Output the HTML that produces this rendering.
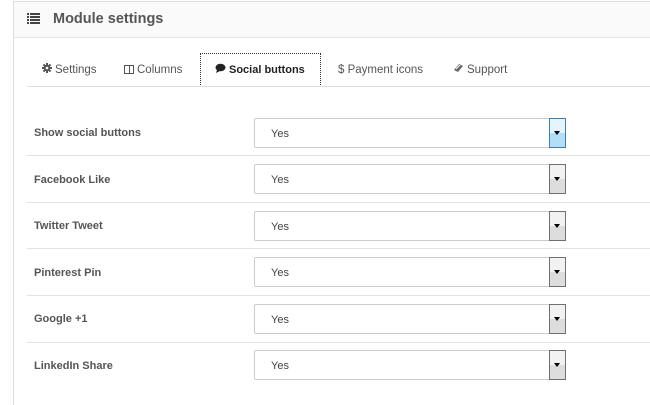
<!DOCTYPE html>
<html style="height:405px;overflow:hidden"><head><style>
body{margin:0;width:650px;height:405px;background:#fff;font-family:"Liberation Sans",sans-serif;overflow:hidden;position:relative}
.panel{position:absolute;left:13px;top:1px;width:637px;height:404px;border-left:1px solid #ddd;border-top:1px solid #ddd}
.head{position:absolute;left:14px;top:2px;width:636px;height:35px;background:#fafafa;border-bottom:1px solid #e5e5e5}
.head span{position:absolute;left:39px;top:9px;font-size:14.5px;font-weight:bold;color:#555}
.tabline{position:absolute;left:27px;top:86px;width:623px;border-top:1px solid #ddd}
.tab{position:absolute;top:63px;font-size:11.5px;line-height:14px;color:#555;white-space:nowrap}
.tab i{display:inline-block;vertical-align:middle;margin-right:3px;font-style:normal}
.active{position:absolute;left:200px;top:53px;width:119px;height:33px;border:1px dotted #333;border-bottom:none;background:#fff}
.lbl{position:absolute;left:34px;font-size:11px;font-weight:bold;color:#555}
.sel{position:absolute;left:254px;width:311px;height:30px;border:1px solid #ccc;border-radius:2px;background:#fff;box-sizing:border-box}
.sel span{position:absolute;left:16px;top:9px;font-size:11px;color:#444}
.btn{position:absolute;left:549px;width:17px;height:30px;border:1px solid #707070;box-sizing:border-box;background:linear-gradient(#f2f2f2 50%,#ddd 50%)}
.btn.f{border-color:#3c7fb1;background:linear-gradient(#e5f4fc 50%,#b4def7 50%)}
.btn:after{content:"";position:absolute;left:4px;top:12px;border-left:3.5px solid transparent;border-right:3.5px solid transparent;border-top:4px solid #000}
.hr{position:absolute;left:27px;width:623px;border-top:1px solid #e3e3e3}
</style></head><body>
<div class="panel"></div>
<div class="head">
<svg style="position:absolute;left:13px;top:11px" width="13" height="11"><g fill="#444"><rect x="0" y="0" width="2" height="2"/><rect x="0" y="3" width="2" height="2"/><rect x="0" y="6" width="2" height="2"/><rect x="0" y="9" width="2" height="2"/><rect x="3" y="0" width="10" height="2"/><rect x="3" y="3" width="10" height="2"/><rect x="3" y="6" width="10" height="2"/><rect x="3" y="9" width="10" height="2"/></g></svg>
<span>Module settings</span></div>
<div class="active"></div>
<div class="tabline"></div>
<div class="tab" style="left:42px"><i><svg width="10" height="10" viewBox="0 0 10 10"><g fill="#555"><circle cx="5" cy="5" r="3.2"/><rect x="4" y="0" width="2" height="10"/><rect x="0" y="4" width="10" height="2"/><rect x="4" y="0" width="2" height="10" transform="rotate(45 5 5)"/><rect x="4" y="0" width="2" height="10" transform="rotate(-45 5 5)"/></g><circle cx="5" cy="5" r="1.3" fill="#fff"/></svg></i>Settings</div>
<div class="tab" style="left:124px"><i style="width:10px;height:9px;border:1px solid #555;box-sizing:border-box;background:linear-gradient(90deg,transparent 4px,#555 4px,#555 5px,transparent 5px)"></i>Columns</div>
<div class="tab" style="left:215px;color:#222;font-weight:bold;font-size:11px"><i><svg width="11" height="10"><ellipse cx="5.5" cy="4.5" rx="5" ry="3.8" fill="#222"/><path d="M2 7 L1 10 L5 8z" fill="#222"/></svg></i>Social buttons</div>
<div class="tab" style="left:338px">$ Payment icons</div>
<div class="tab" style="left:453px"><i><svg width="11" height="10"><path d="M1 7 L6 1 L10 3 L5 9z" fill="#666"/><path d="M3 6 L7 2" stroke="#fff"/></svg></i>Support</div>

<div class="lbl" style="top:127px">Show social buttons</div>
<div class="sel" style="top:118px"><span>Yes</span></div><div class="btn f" style="top:118px"></div>
<div class="hr" style="top:155px"></div>
<div class="lbl" style="top:174px">Facebook Like</div>
<div class="sel" style="top:164px"><span>Yes</span></div><div class="btn" style="top:164px"></div>
<div class="hr" style="top:202px"></div>
<div class="lbl" style="top:220px">Twitter Tweet</div>
<div class="sel" style="top:211px"><span>Yes</span></div><div class="btn" style="top:211px"></div>
<div class="hr" style="top:248px"></div>
<div class="lbl" style="top:267px">Pinterest Pin</div>
<div class="sel" style="top:257px"><span>Yes</span></div><div class="btn" style="top:257px"></div>
<div class="hr" style="top:295px"></div>
<div class="lbl" style="top:313px">Google +1</div>
<div class="sel" style="top:304px"><span>Yes</span></div><div class="btn" style="top:304px"></div>
<div class="hr" style="top:342px"></div>
<div class="lbl" style="top:360px">LinkedIn Share</div>
<div class="sel" style="top:350px"><span>Yes</span></div><div class="btn" style="top:350px"></div>
</body></html>
